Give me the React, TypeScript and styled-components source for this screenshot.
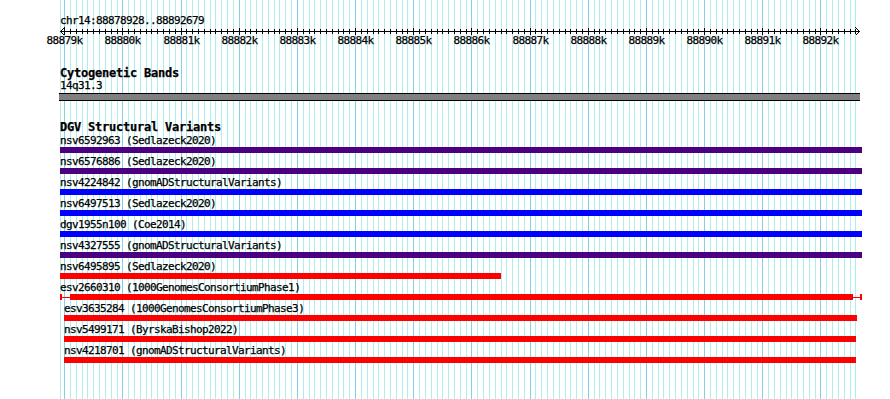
import React from 'react';
import styled, { createGlobalStyle } from 'styled-components';

// --- Escala do trecho mostrado ---
const START = 88878928;
const END = 88892679;
const LEFT = 60;
const SPAN = 800;
const toX = (p: number) => LEFT + ((p - START) * SPAN) / (END - START);

const ticks: { x: number; major: boolean; pos: number }[] = [];
for (let p = 88879000; p <= END; p += 100) {
  ticks.push({ x: Math.round(toX(p)), major: p % 1000 === 0, pos: p });
}

const COLORS = {
  purple: '#4B0082',
  blue: '#0000FF',
  red: '#FF0000',
};

type Variant = {
  id: string;
  study: string;
  color: keyof typeof COLORS;
  start: number;
  end: number;
  whisker?: [number, number];
};

const variants: Variant[] = [
  { id: 'nsv6592963', study: 'Sedlazeck2020', color: 'purple', start: 60, end: 862 },
  { id: 'nsv6576886', study: 'Sedlazeck2020', color: 'purple', start: 60, end: 862 },
  { id: 'nsv4224842', study: 'gnomADStructuralVariants', color: 'blue', start: 60, end: 862 },
  { id: 'nsv6497513', study: 'Sedlazeck2020', color: 'blue', start: 60, end: 862 },
  { id: 'dgv1955n100', study: 'Coe2014', color: 'blue', start: 60, end: 862 },
  { id: 'nsv4327555', study: 'gnomADStructuralVariants', color: 'purple', start: 60, end: 862 },
  { id: 'nsv6495895', study: 'Sedlazeck2020', color: 'red', start: 60, end: 501 },
  { id: 'esv2660310', study: '1000GenomesConsortiumPhase1', color: 'red', start: 69, end: 852, whisker: [60, 862] },
  { id: 'esv3635284', study: '1000GenomesConsortiumPhase3', color: 'red', start: 64, end: 857 },
  { id: 'nsv5499171', study: 'ByrskaBishop2022', color: 'red', start: 64, end: 856 },
  { id: 'nsv4218701', study: 'gnomADStructuralVariants', color: 'red', start: 64, end: 856 },
];

// --- Estilização ---
const GlobalStyle = createGlobalStyle`
  body {
    margin: 0;
    background: #ffffff;
  }
`;

const Panel = styled.div`
  position: relative;
  width: 890px;
  height: 399px;
  overflow: hidden;
  background: #ffffff;
  color: #000000;
  font-family: "DejaVu Sans Mono", "Liberation Mono", monospace;
  -webkit-text-stroke: 0.25px #000000; // aproxima a fonte de pixel do GD
`;

const GridLayer = styled.svg`
  position: absolute;
  left: 0;
  top: 0;
`;

const Content = styled.div`
  position: relative;
  z-index: 1;
  display: flex;
  flex-direction: column;
  width: 802px;
  padding: 16px 0 0 ${LEFT}px;
`;

const SmallText = styled.div<{ $indent?: number }>`
  height: 10px;
  margin-left: ${(p) => p.$indent ?? 0}px;
  font-size: 11px;
  line-height: 10px;
  letter-spacing: -0.62px;
  white-space: nowrap;
`;

const TrackTitle = styled.div<{ $gap: number }>`
  height: 12px;
  margin-top: ${(p) => p.$gap}px;
  font-size: 12px;
  font-weight: bold;
  line-height: 12px;
  letter-spacing: -0.22px;
  white-space: nowrap;
`;

const RulerSvg = styled.svg`
  display: block;
`;

const TickLabels = styled.div`
  position: relative;
  height: 10px;
`;

const TickLabel = styled.span`
  position: absolute;
  top: 0;
  transform: translateX(-50%);
  font-size: 11px;
  line-height: 10px;
  letter-spacing: -0.62px;
  white-space: nowrap;
`;

const BandLabel = styled(SmallText)`
  margin-top: 2px;
`;

const Band = styled.div`
  width: 801px;
  height: 6px;
  margin-top: 2px;
  margin-left: -1px;
  background: #808080;
  border-top: 1px solid #000000;
  border-bottom: 1px solid #000000;
`;

const VariantList = styled.div`
  display: flex;
  flex-direction: column;
  margin-top: 3px;
`;

const VariantRow = styled.div`
  display: flex;
  flex-direction: column;
`;

const BarLane = styled.div`
  display: flex;
  height: 6px;
  margin: 1px 0 4px;
`;

const Bar = styled.div<{ $color: string; $offset: number; $width: number }>`
  flex: none;
  width: ${(p) => p.$width}px;
  height: 6px;
  margin-left: ${(p) => p.$offset}px;
  background: ${(p) => p.$color};
`;

const Whisker = styled.div<{ $offset: number; $width: number }>`
  display: flex;
  align-items: center;
  width: ${(p) => p.$width}px;
  margin-left: ${(p) => p.$offset}px;
`;

const Cap = styled.div<{ $color: string }>`
  flex: none;
  width: 2px;
  height: 6px;
  background: ${(p) => p.$color};
`;

const Stem = styled.div<{ $color: string }>`
  flex: 1;
  height: 1px;
  background: ${(p) => p.$color};
`;

const VariantBar: React.FC<{ v: Variant }> = ({ v }) => {
  const color = COLORS[v.color];
  if (v.whisker) {
    const [ws, we] = v.whisker;
    return (
      <BarLane>
        <Whisker $offset={ws - LEFT} $width={we - ws}>
          <Cap $color={color} />
          <Stem $color={color} />
          <Bar $color={color} $offset={0} $width={v.end - v.start} />
          <Stem $color={color} />
          <Cap $color={color} />
        </Whisker>
      </BarLane>
    );
  }
  return (
    <BarLane>
      <Bar $color={color} $offset={v.start - LEFT} $width={v.end - v.start} />
    </BarLane>
  );
};

const App: React.FC = () => {
  return (
    <>
      <GlobalStyle />
      <Panel>
        <GridLayer width={890} height={399} shapeRendering="crispEdges">
          <rect x={LEFT} y={0} width={1} height={399} fill="#AFEEEE" />
          {ticks.map((t) => (
            <rect
              key={t.pos}
              x={t.x}
              y={0}
              width={1}
              height={399}
              fill={t.major ? '#87CEEB' : '#AFEEEE'}
            />
          ))}
        </GridLayer>

        <Content>
          <SmallText>chr14:88878928..88892679</SmallText>

          <RulerSvg width={802} height={10} shapeRendering="crispEdges">
            <rect x={0} y={5} width={800} height={1} fill="#000" />
            {ticks.map((t) => (
              <rect
                key={t.pos}
                x={t.x - LEFT}
                y={t.major ? 2 : 3}
                width={1}
                height={t.major ? 7 : 5}
                fill="#000"
              />
            ))}
            <polyline points="4.5,1.5 0.5,5.5 4.5,9.5" fill="none" stroke="#000" strokeWidth={1} />
            <polyline points="795.5,1.5 799.5,5.5 795.5,9.5" fill="none" stroke="#000" strokeWidth={1} />
          </RulerSvg>

          <TickLabels>
            {ticks
              .filter((t) => t.major)
              .map((t) => (
                <TickLabel key={t.pos} style={{ left: t.x - LEFT + 0.5 }}>
                  {t.pos / 1000}k
                </TickLabel>
              ))}
          </TickLabels>

          <TrackTitle $gap={21}>Cytogenetic Bands</TrackTitle>
          <BandLabel>14q31.3</BandLabel>
          <Band />

          <TrackTitle $gap={20}>DGV Structural Variants</TrackTitle>
          <VariantList>
            {variants.map((v) => (
              <VariantRow key={v.id}>
                <SmallText $indent={(v.whisker ? v.whisker[0] : v.start) - LEFT}>
                  {v.id} ({v.study})
                </SmallText>
                <VariantBar v={v} />
              </VariantRow>
            ))}
          </VariantList>
        </Content>
      </Panel>
    </>
  );
};

export default App;
